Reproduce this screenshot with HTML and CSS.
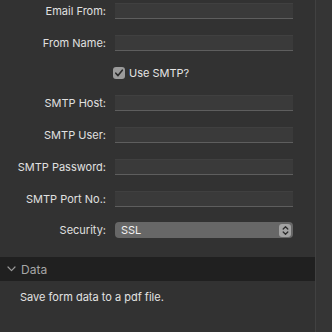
FILE: index.html
```html
<!DOCTYPE html>
<html>
<head>
<meta charset="utf-8">
<link rel="stylesheet" href="styles.css">
</head>
<body>
<div class="window">
  <div class="panel">
    <div class="form">
      <div class="row"><label class="lbl">Email From:</label><div class="field"></div></div>
      <div class="row"><label class="lbl">From Name:</label><div class="field"></div></div>
      <div class="row check-row"><span class="lbl"></span>
        <div class="check-wrap">
          <span class="checkbox"><svg width="12" height="12" viewBox="0 0 12 12"><path d="M2.8 6.2 L5 8.6 L9.3 3.2" fill="none" stroke="#2a2a2a" stroke-width="1.6" stroke-linecap="round" stroke-linejoin="round"/></svg></span>
          <span class="check-text">Use SMTP?</span>
        </div>
      </div>
      <div class="row"><label class="lbl">SMTP Host:</label><div class="field"></div></div>
      <div class="row"><label class="lbl">SMTP User:</label><div class="field"></div></div>
      <div class="row"><label class="lbl">SMTP Password:</label><div class="field"></div></div>
      <div class="row"><label class="lbl">SMTP Port No.:</label><div class="field"></div></div>
      <div class="row sel-row"><label class="lbl">Security:</label>
        <div class="select"><span class="sel-text">SSL</span>
          <span class="stepper"><svg width="11" height="13" viewBox="0 0 11 13"><path d="M3.2 5 L5.5 2.8 L7.8 5" fill="none" stroke="#2b2b2b" stroke-width="1.3" stroke-linecap="round" stroke-linejoin="round"/><path d="M3.2 8 L5.5 10.2 L7.8 8" fill="none" stroke="#2b2b2b" stroke-width="1.3" stroke-linecap="round" stroke-linejoin="round"/></svg></span>
        </div>
      </div>
    </div>
    <div class="section-head">
      <svg class="chev" width="9" height="6" viewBox="0 0 9 6"><path d="M1 1 L4.5 4.6 L8 1" fill="none" stroke="#9a9a9a" stroke-width="1.2" stroke-linecap="round" stroke-linejoin="round"/></svg>
      <span class="section-title">Data</span>
    </div>
    <div class="section-body">Save form data to a pdf file.</div>
  </div>
  <div class="strip"></div>
</div>
</body>
</html>
```
FILE: styles.css
```css
html, body {
  margin: 0;
  padding: 0;
  background: #323232;
}
body {
  font-family: Inter, "Liberation Sans", Arial, sans-serif;
  width: 332px;
  height: 332px;
  overflow: hidden;
}
.window {
  display: flex;
  height: 332px;
}
.panel {
  width: 315px;
  background: #323232;
  display: flex;
  flex-direction: column;
}
.strip {
  flex: 1;
  background: #353535;
  border-left: 1px solid #414141;
}
.form {
  display: flex;
  flex-direction: column;
  gap: 16px;
  padding-top: 3px;
}
.row {
  display: flex;
  align-items: center;
  height: 16px;
}
.check-row {
  height: 12px;
}
.sel-row {
  margin-top: -1px;
}
.lbl {
  width: 106px;
  text-align: right;
  font-size: 11px;
  color: #e0e0e0;
  margin-right: 9px;
  flex: none;
}
.field {
  width: 178px;
  height: 16px;
  box-sizing: border-box;
  background: #3a3a3a;
  border-top: 1px solid #404040;
  border-bottom: 1px solid #5e5e5e;
}
.check-wrap {
  display: flex;
  align-items: center;
  margin-left: -2px;
}
.checkbox {
  width: 12px;
  height: 12px;
  border-radius: 3px;
  background: #9b9b9b;
  display: flex;
}
.check-text {
  margin-left: 4px;
  font-size: 11px;
  color: #e4e4e4;
}
.select {
  width: 178px;
  height: 16px;
  box-sizing: border-box;
  background: #676767;
  border-radius: 4px;
  display: flex;
  align-items: center;
  justify-content: space-between;
  padding: 0 2px 0 6px;
}
.sel-text {
  font-size: 11px;
  color: #f2f2f2;
}
.stepper {
  width: 12px;
  height: 13px;
  background: #a3a3a3;
  border-radius: 3px;
  display: flex;
  align-items: center;
  justify-content: center;
}
.section-head {
  margin-top: 19px;
  height: 24px;
  background: #202020;
  display: flex;
  align-items: center;
  padding-left: 7px;
}
.chev {
  margin-right: 5px;
}
.section-title {
  font-size: 12px;
  color: #a6a6a6;
}
.section-body {
  padding: 9px 0 0 20px;
  font-size: 11px;
  color: #e2e2e2;
}
```
